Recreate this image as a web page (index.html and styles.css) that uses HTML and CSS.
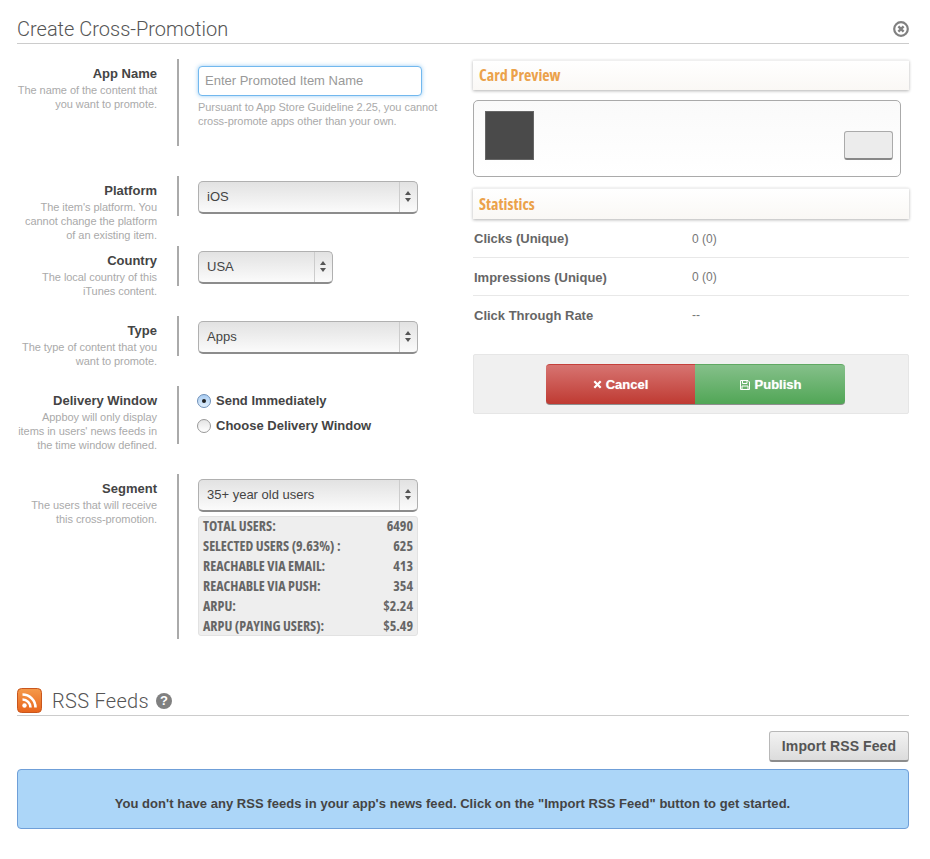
FILE: index.html
```html
<!DOCTYPE html>
<html lang="en">
<head>
    <meta charset="UTF-8">
    <meta name="viewport" content="width=device-width, initial-scale=1.0">
    <title>Create Cross-Promotion</title>
    <link rel="stylesheet" href="styles.css">
</head>
<body>
    <div class="section-head">
        <h2>Create Cross-Promotion</h2>
        <svg class="close-icon" width="16" height="16" viewBox="0 0 16 16">
            <circle cx="8" cy="8" r="6.8" fill="#fff" stroke="#808080" stroke-width="2.2"/>
            <path d="M5.400 5.400l5.200 5.200M10.600 5.400l-5.200 5.200" stroke="#808080" stroke-width="2.4"/>
        </svg>
    </div>

    <div class="columns">
        <div class="form">
            <div class="row row-name">
                <div class="label"><h4>App Name</h4><p>The name of the content that you want to promote.</p></div>
                <div class="control">
                    <input class="text-input" type="text" placeholder="Enter Promoted Item Name">
                    <p class="help">Pursuant to App Store Guideline 2.25, you cannot cross-promote apps other than your own.</p>
                </div>
            </div>
            <div class="row">
                <div class="label"><h4>Platform</h4><p>The item's platform. You cannot change the platform of an existing item.</p></div>
                <div class="control">
                    <div class="select"><span>iOS</span><i class="arrows"></i></div>
                </div>
            </div>
            <div class="row">
                <div class="label"><h4>Country</h4><p>The local country of this iTunes content.</p></div>
                <div class="control">
                    <div class="select select-small"><span>USA</span><i class="arrows"></i></div>
                </div>
            </div>
            <div class="row">
                <div class="label"><h4>Type</h4><p>The type of content that you want to promote.</p></div>
                <div class="control">
                    <div class="select"><span>Apps</span><i class="arrows"></i></div>
                </div>
            </div>
            <div class="row row-window">
                <div class="label"><h4>Delivery Window</h4><p>Appboy will only display items in users' news feeds in the time window defined.</p></div>
                <div class="control control-radios">
                    <label class="radio"><i class="dot dot-on"></i>Send Immediately</label>
                    <label class="radio"><i class="dot"></i>Choose Delivery Window</label>
                </div>
            </div>
            <div class="row row-segment">
                <div class="label"><h4>Segment</h4><p>The users that will receive this cross-promotion.</p></div>
                <div class="control">
                    <div class="select"><span>35+ year old users</span><i class="arrows"></i></div>
                    <ul class="segment-stats">
                        <li><span>TOTAL USERS:</span><span>6490</span></li>
                        <li><span>SELECTED USERS (9.63%) :</span><span>625</span></li>
                        <li><span>REACHABLE VIA EMAIL:</span><span>413</span></li>
                        <li><span>REACHABLE VIA PUSH:</span><span>354</span></li>
                        <li><span>ARPU:</span><span>$2.24</span></li>
                        <li><span>ARPU (PAYING USERS):</span><span>$5.49</span></li>
                    </ul>
                </div>
            </div>
        </div>

        <div class="side">
            <h3 class="panel-title">Card Preview</h3>
            <div class="card">
                <div class="card-image"></div>
                <div class="card-button"></div>
            </div>
            <h3 class="panel-title panel-tall">Statistics</h3>
            <table class="stats">
                <tr><th>Clicks (Unique)</th><td>0 (0)</td></tr>
                <tr><th>Impressions (Unique)</th><td>0 (0)</td></tr>
                <tr><th>Click Through Rate</th><td>--</td></tr>
            </table>
            <div class="actions">
                <button class="btn btn-cancel">
                    <svg width="9" height="9" viewBox="0 0 9 9"><path d="M1.3 1.3l6.4 6.4M7.7 1.3l-6.4 6.4" stroke="#fff" stroke-width="2.2"/></svg>
                    Cancel
                </button>
                <button class="btn btn-publish">
                    <svg width="12" height="12" viewBox="0 0 12 12" fill="none" stroke="#fff"><path d="M1.5 1.5h7.5l1.5 1.5v7.5h-9z"/><path d="M3.5 1.5v3h4.5v-3M3 10.500v-3.500h6v3.500"/></svg>
                    Publish
                </button>
            </div>
        </div>
    </div>

    <div class="section-head section-rss">
        <svg class="rss-icon" width="25" height="25" viewBox="0 0 25 25">
            <defs>
                <linearGradient id="rssFill" x1="0" y1="0" x2="0" y2="1">
                    <stop offset="0" stop-color="#f59a4a"/>
                    <stop offset="1" stop-color="#e8641c"/>
                </linearGradient>
            </defs>
            <rect x="0.5" y="0.5" width="24" height="24" rx="4" fill="url(#rssFill)" stroke="#c9561d"/>
            <circle cx="7.500" cy="17.500" r="2.200" fill="#fff"/>
            <path d="M5.500 11.500a8 8 0 0 1 8 8M5.500 6.500a13 13 0 0 1 13 13" fill="none" stroke="#fff" stroke-width="2.600"/>
        </svg>
        <h2>RSS Feeds</h2>
        <span class="help-icon">?</span>
    </div>
    <div class="toolbar">
        <button class="btn-import">Import RSS Feed</button>
    </div>
    <div class="notice">You don't have any RSS feeds in your app's news feed. Click on the "Import RSS Feed" button to get started.</div>
</body>
</html>
```

FILE: styles.css
```css
* { box-sizing: border-box; }
body { margin: 0; padding: 0 21px 0 17px; background: #fff; font-family: "Liberation Sans", Arial, sans-serif; color: #444; font-size: 13px; }
h2, h3, h4, p, ul { margin: 0; padding: 0; }

.section-head { display: flex; align-items: center; height: 44px; border-bottom: 1px solid #ccc; }
.section-head h2 { font-family: Roboto, "Liberation Sans", sans-serif; font-size: 20px; font-weight: 300; color: #555; line-height: 24px; padding-top: 14px; }
.close-icon { margin-left: auto; margin-top: 14px; }

.columns { display: flex; }
.form { width: 456px; padding-top: 15px; }
.side { width: 436px; padding-top: 16px; }

.row { display: flex; height: 40px; margin-bottom: 30px; }
.row-name { height: 87px; }
.row-window { height: 58px; }
.row-segment { height: 165px; margin-bottom: 0; }
.label { width: 141px; margin-left: -1px; text-align: right; padding-top: 7px; }
.label h4 { font-size: 13px; line-height: 15px; color: #444; }
.label p { font-size: 11px; line-height: 14px; color: #aaa; margin-top: 2px; letter-spacing: -0.05px; }
.control { margin-left: 20px; border-left: 2px solid #aaa; padding: 5px 0 0 19px; width: 262px; }

.text-input { display: block; width: 224px; height: 30px; margin-top: 2px; padding: 0 6px 2px; border: 1px solid #72b8ee; border-radius: 4px; box-shadow: 0 0 4px rgba(82, 168, 236, 0.6); font-family: "Liberation Sans", Arial, sans-serif; font-size: 13px; outline: none; }
.text-input::placeholder { color: #999; opacity: 1; }
.help { font-size: 11px; line-height: 14px; color: #aaa; margin-top: 4px; width: 245px; letter-spacing: -0.05px; }

.select { display: flex; align-items: center; width: 220px; height: 33px; border: 1px solid #b0b0b0; border-bottom: 2px solid #8c8c8c; border-radius: 5px; background: linear-gradient(#e2e2e2, #fbfbfb); font-size: 13px; color: #444; }
.select span { flex: 1; padding: 0 0 2px 8px; }
.select-small { width: 135px; }
.arrows { position: relative; width: 18px; height: 100%; border-left: 1px solid #ccc; }
.arrows::before, .arrows::after { content: ""; position: absolute; left: 5px; border-left: 3px solid transparent; border-right: 3px solid transparent; }
.arrows::before { top: 9px; border-bottom: 4px solid #555; }
.arrows::after { top: 16px; border-top: 4px solid #555; }

.control-radios { padding-top: 7px; }
.radio { display: flex; align-items: center; height: 15px; margin-bottom: 10px; font-weight: bold; color: #444; }
.dot { display: block; position: relative; width: 14px; height: 14px; margin: 1px 5px 0 -1px; border: 1px solid #999; border-radius: 50%; background: linear-gradient(#e4e4e4, #fff); }
.dot-on { border-color: #6d8fb8; background: linear-gradient(#a9cdf3, #e2effb); }
.dot-on::after { content: ""; position: absolute; left: 4px; top: 4px; width: 4px; height: 4px; border-radius: 50%; background: #222; }

.segment-stats { list-style: none; width: 220px; height: 120px; margin-top: 4px; background: #eee; border: 1px solid #e2e2e2; border-radius: 3px; padding: 0 4px; }
.segment-stats li { display: flex; justify-content: space-between; height: 20px; line-height: 17px; font-family: "Open Sans", sans-serif; font-stretch: condensed; font-weight: bold; font-size: 14px; color: #666; }

.panel-title { height: 30px; line-height: 29px; padding-left: 6px; border-top: 1px solid #f0f0f0; background: linear-gradient(#fff, #faf8f5); box-shadow: 0 1px 3px rgba(0, 0, 0, 0.3); font-family: "Open Sans", sans-serif; font-stretch: condensed; font-size: 16px; font-weight: bold; color: #eba24b; }
.panel-tall { height: 31px; line-height: 31px; }
.card { display: flex; justify-content: space-between; align-items: flex-end; width: 428px; height: 77px; margin: 10px 0 11px; padding: 0 7px 16px 11px; border: 1px solid #aaa; border-radius: 5px; background: linear-gradient(#fafafa, #fff); }
.card-image { width: 49px; height: 49px; background: #4a4a4a; border: 1px solid #666; }
.card-button { width: 49px; height: 29px; background: #ececec; border: 1px solid #aaa; border-bottom: 2px solid #888; border-radius: 3px; }

.stats { width: 100%; border-collapse: collapse; }
.stats th, .stats td { height: 38px; border-bottom: 1px solid #e8e8e8; font-size: 13px; text-align: left; color: #666; padding: 2px 0 0 1px; }
.stats tr:last-child th, .stats tr:last-child td { border-bottom: none; }
.stats th { width: 218px; }
.stats td { color: #777; font-size: 12px; }

.actions { display: flex; justify-content: center; height: 60px; margin-top: 21px; padding: 9px 0 0 9px; background: #f0f0f0; border: 1px solid #e6e6e6; border-radius: 2px; }
.btn { display: flex; align-items: center; justify-content: center; gap: 4px; width: 149px; height: 41px; border: none; color: #fff; font-family: "Liberation Sans", Arial, sans-serif; font-size: 13px; font-weight: bold; text-shadow: 0 0 1px rgba(255, 255, 255, 0.6); }
.btn-cancel { border-radius: 4px 0 0 4px; border-top: 1px solid #c4403b; border-bottom: 1px solid #8e8e8e; background: linear-gradient(#d77471, #bf3a32); }
.btn-publish { width: 150px; border-radius: 0 4px 4px 0; border-top: 1px solid #5fa862; border-bottom: 1px solid #8e8e8e; background: linear-gradient(#85c08a, #51a656); }

.section-rss { justify-content: flex-start; height: 30px; margin-top: 47px; }
.section-rss h2 { padding: 0; margin-left: 10px; letter-spacing: 0.3px; }
.rss-icon { display: block; }
.help-icon { width: 16px; height: 16px; margin-left: 7px; border-radius: 50%; background: #808080; color: #fff; font-size: 13px; font-weight: bold; line-height: 16px; text-align: center; }

.toolbar { display: flex; justify-content: flex-end; padding-top: 15px; }
.btn-import { width: 140px; height: 31px; border: 1px solid #b8b8b8; border-bottom: 2px solid #8c8c8c; border-radius: 3px; background: linear-gradient(#f2f2f2, #dcdcdc); color: #555; font-family: "Liberation Sans", Arial, sans-serif; font-size: 14px; font-weight: bold; letter-spacing: 0.1px; padding: 0; }

.notice { height: 60px; margin-top: 7px; padding: 26px 21px 0 0; background: #acd6f8; border: 1px solid #6f9fd8; border-radius: 4px; font-weight: bold; line-height: 15px; color: #444; text-align: center; letter-spacing: 0.04px; }
```
